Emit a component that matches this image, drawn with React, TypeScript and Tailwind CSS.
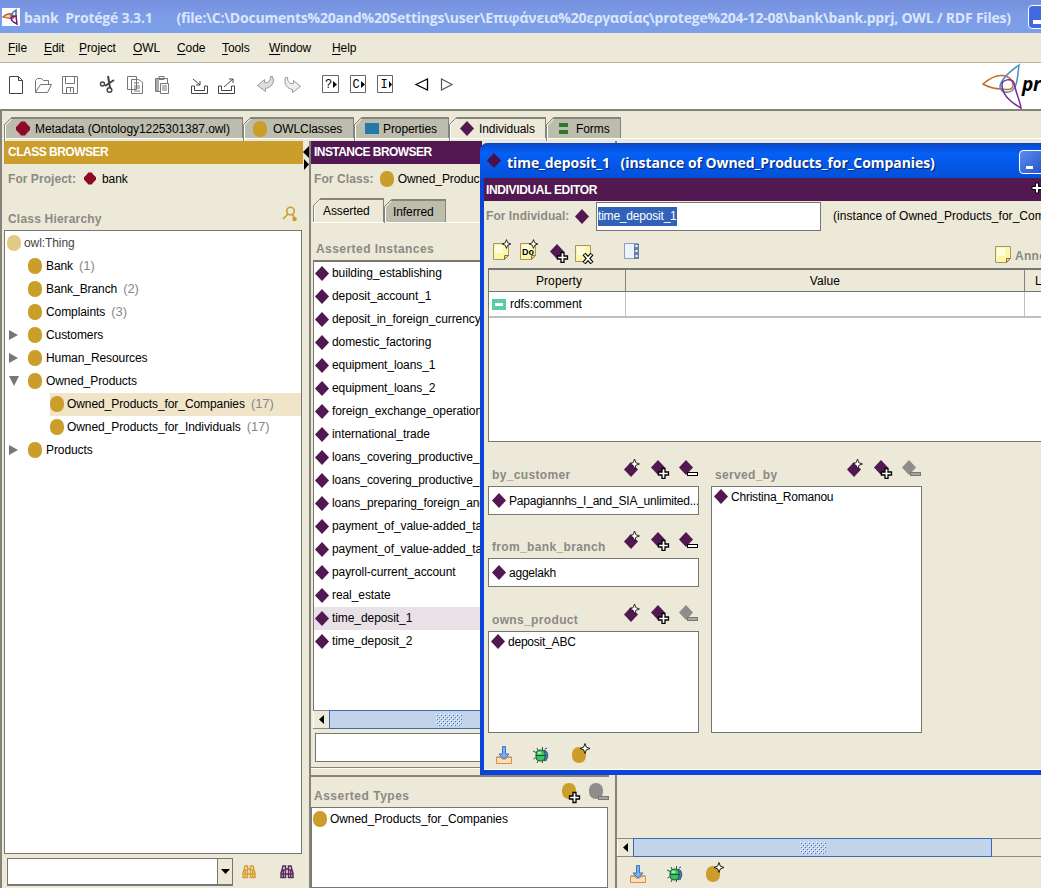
import type { ReactNode } from "react";
import clsx from "clsx";

interface ClassNode {
  name: string;
  count?: number;
  level: number;
  arrow?: "right" | "down";
  selected?: boolean;
}

const classes: ClassNode[] = [
  { name: "Bank", count: 1, level: 1 },
  { name: "Bank_Branch", count: 2, level: 1 },
  { name: "Complaints", count: 3, level: 1 },
  { name: "Customers", level: 1, arrow: "right" },
  { name: "Human_Resources", level: 1, arrow: "right" },
  { name: "Owned_Products", level: 1, arrow: "down" },
  { name: "Owned_Products_for_Companies", count: 17, level: 2, selected: true },
  { name: "Owned_Products_for_Individuals", count: 17, level: 2 },
  { name: "Products", level: 1, arrow: "right" },
];

const instances = [
  "building_establishing",
  "deposit_account_1",
  "deposit_in_foreign_currency",
  "domestic_factoring",
  "equipment_loans_1",
  "equipment_loans_2",
  "foreign_exchange_operations",
  "international_trade",
  "loans_covering_productive_1",
  "loans_covering_productive_2",
  "loans_preparing_foreign_and",
  "payment_of_value-added_tax_1",
  "payment_of_value-added_tax_2",
  "payroll-current_account",
  "real_estate",
  "time_deposit_1",
  "time_deposit_2",
];

const STAR = "M0-5.5 1.5-1.5 5.5 0 1.5 1.5 0 5.5-1.5 1.5-5.5 0-1.5-1.5z";
const PLUS = "M-1.5-5h3v3.500h3.500v3h-3.500v3.500h-3v-3.500h-3.500v-3h3.500z";

function Diamond({ color = "#521852" }: { color?: string }) {
  return (
    <svg width="14" height="15" viewBox="0 0 14 15" className="shrink-0">
      <path d="M7 0 14 7.500 7 15 0 7.500z" fill={color} />
    </svg>
  );
}

function ClassDot({ color = "#cb9e2b" }: { color?: string }) {
  return (
    <svg width="14" height="16" viewBox="0 0 14 16" className="shrink-0">
      <rect width="14" height="16" rx="6.600" ry="7" fill={color} />
    </svg>
  );
}

function ProjectDot({ size = 11 }: { size?: number }) {
  return (
    <svg width={size} height={size + 1} viewBox="0 0 14 14" className="shrink-0">
      <path d="M5 0h4l2 2.500 3 3v3l-3 3L9 14H5l-2-2.500-3-3v-3l3-3z" fill="#8c0a28" />
    </svg>
  );
}

function DiamondAction({ kind, disabled }: { kind: "new" | "add" | "remove"; disabled?: boolean }) {
  const fill = disabled ? "#8d8d8d" : "#521852";
  return (
    <svg width="20" height="21" viewBox="0 0 20 21" className="shrink-0">
      {kind === "new" ? (
        <>
          <path d="M8 4 15 11.500 8 19 1 11.500z" fill={fill} />
          <path d={STAR} transform="translate(11.500 6) scale(.9)" fill="#fff" stroke="#111" strokeWidth="1" />
        </>
      ) : (
        <path d="M7 2 14 9.500 7 17 0 9.500z" fill={fill} />
      )}
      {kind === "add" && <path d={PLUS} transform="translate(12.500 15.500)" fill="#fff" stroke="#000" strokeWidth="1.300" />}
      {kind === "remove" && (
        <rect x="8.500" y="14.500" width="10" height="3" fill={disabled ? "#a5a5a5" : "#fff"} stroke={disabled ? "#777" : "#000"} />
      )}
    </svg>
  );
}

function ClassAction({ kind }: { kind: "new" | "add" | "remove" }) {
  return (
    <svg width="20" height="21" viewBox="0 0 20 21" className="shrink-0">
      {kind === "new" ? (
        <>
          <rect x="1" y="4" width="14" height="16" rx="6.600" ry="7" fill="#cb9e2b" />
          <path d={STAR} transform="translate(14 5.500) scale(.9)" fill="#fff" stroke="#000" />
        </>
      ) : (
        <rect x="0" y="0" width="14" height="16" rx="6.600" ry="7" fill={kind === "add" ? "#cb9e2b" : "#8d8d8d"} />
      )}
      {kind === "add" && <path d={PLUS} transform="translate(12.500 14.500)" fill="#fff" stroke="#000" strokeWidth="1.300" />}
      {kind === "remove" && <rect x="9.500" y="13.500" width="10" height="3" fill="#a5a5a5" stroke="#777" />}
    </svg>
  );
}

function Note({ kind }: { kind?: "new" | "do" | "delete" }) {
  return (
    <svg width="20" height="24" viewBox="0 0 20 24" className="shrink-0">
      <path d="M1.500 5.500h15v12l-4 4h-11z" fill="#fff5a8" stroke="#a09868" />
      <path d="M3 7h8v8H3z" fill="#fffde0" />
      <path d="M12.500 21.500v-4h4z" fill="#f1d66c" stroke="#8c7440" />
      {kind === "do" && (
        <text x="3" y="16.500" fontSize="9" fontWeight="bold" fontFamily="Liberation Sans, sans-serif">
          Do
        </text>
      )}
      {(kind === "new" || kind === "do") && (
        <path d={STAR} transform="translate(14.500 6) scale(.8)" fill="#fff" stroke="#000" />
      )}
      {kind === "delete" && (
        <>
          <path d="m10 14 8 9m0-9-8 9" stroke="#000" strokeWidth="4" />
          <path d="m10.500 14.500 7 8m0-8-7 8" stroke="#fff" strokeWidth="1.800" />
        </>
      )}
    </svg>
  );
}

function Binoculars({ color }: { color: string }) {
  return (
    <svg width="14" height="14" viewBox="0 0 14 14" fill="none" stroke={color} strokeWidth="1.500">
      <path d="M3 1h2.500v3h3V1H11l1 4 1 3v4.500H8.500V9h-3v3.500H1V8l1-3zM2 5h3.500v4M12 5H8.500v4M3.300 5v7M10.700 5v7M1 9h4M9 9h4" />
    </svg>
  );
}

function StatusIcons() {
  return (
    <div className="flex items-end">
      <svg width="16" height="18" viewBox="0 0 16 18" className="mr-[21px]">
        <path d="M.500 11v6.500h15V11z" fill="#fce0b0" stroke="#d98b55" />
        <path d="M1 11h4l1 2h4l1-2h4" stroke="#9c8a80" fill="#fff" />
        <path d="M6.500.500h3V8h3.500L8 13 3 8h3.500z" fill="#7eb2ee" stroke="#3a72bf" />
      </svg>
      <svg width="16" height="18" viewBox="0 0 16 18" className="mr-[22px]">
        <path d="m4 2 1.500 3m4-4v4M0 5l4 2m-3.500 6 3.500-2m0 6 1.500-3m4 0v3m2.500-14 2-1m-2 11 2 1.500" stroke="#305048" />
        <path d="M11 4c5 1 5 10 0 11z" fill="#4b78b8" stroke="#305080" />
        <rect x="3" y="4" width="9" height="11" rx="4" fill="#3cc060" stroke="#17663a" />
        <path d="M3 9.500h10" stroke="#12572c" />
        <ellipse cx="6.500" cy="7" rx="2" ry="1.300" fill="#a0efa8" />
      </svg>
      <ClassAction kind="new" />
    </div>
  );
}

function TabItem({ label, icon, active, className }: { label: string; icon?: ReactNode; active?: boolean; className?: string }) {
  return (
    <div
      className={clsx(
        "relative flex h-full items-center border-t-2 border-r border-[#85837a] whitespace-nowrap",
        active ? "bg-[#ece9d8]" : "bg-[#bdbdae]",
        className,
      )}
    >
      <svg width="8" height="24" viewBox="0 0 8 24" className="absolute -top-0.5 left-0">
        <path d="M0 0h8L0 8z" fill="#ece9d8" />
        <path d="M.500 24V7.500l7-7" stroke="#85837a" fill="none" />
        <path d="M1.500 24V8l6-6" stroke="#fff" fill="none" />
      </svg>
      {icon}
      <span>{label}</span>
    </div>
  );
}

function Scrollbar({ thumb }: { thumb: string }) {
  return (
    <div className="flex h-[19px] shrink-0 border-y border-[#8a8a82] bg-[#ece9d8]">
      <div className="flex w-4 shrink-0 items-center justify-center border-l border-white">
        <svg width="5" height="9" viewBox="0 0 5 9">
          <path d="M5 0v9L0 4.500z" />
        </svg>
      </div>
      <div className={clsx("-my-px flex shrink-0 items-center justify-center border border-[#3a6bb5] bg-[#c2d3ea]", thumb)}>
        <svg width="26" height="12">
          <defs>
            <pattern id="grip" width="4" height="4" patternUnits="userSpaceOnUse">
              <path d="M0 0h1v1H0zM2 2h1v1H2z" fill="#fff" />
              <path d="M1 1h1v1H1zM3 3h1v1H3z" fill="#4878c0" />
            </pattern>
          </defs>
          <rect width="26" height="12" fill="url(#grip)" />
        </svg>
      </div>
    </div>
  );
}

function Toolbar() {
  return (
    <div className="flex h-[49px] shrink-0 items-start border-t border-b-2 border-t-[#b8b5a6] border-b-[#85837a] bg-white pt-2.5 pl-2">
      <svg width="450" height="24" viewBox="8 73 450 24" fill="none" stroke="#444" className="shrink-0">
        {/* new, open, save */}
        <path d="M9.500 76.500h9l4 4v13h-13zM18.500 76.500v4h4" />
        <path d="M35.500 92.500v-12l2-2h4l2 2h5v4M35.500 92.500l5-8h11l-4 8z" stroke="#777" />
        <path d="M62.500 76.500h15v17h-15zM65.500 76.500v7h9v-7M66.500 93.500v-6h7v6M70.500 88v4" stroke="#777" />
        {/* cut, copy, paste */}
        <path d="m108 76 2 12M114 80l-9 6" strokeWidth="2" />
        <circle cx="102.500" cy="84" r="2" strokeWidth="1.500" />
        <circle cx="109.500" cy="90" r="2.300" strokeWidth="1.500" />
        <path d="M127.500 76.500h9v13h-9zM131.500 79.500h7l4 3v11h-11zM134 83h5m-5 3h6m-6 2h6m-6 3h6" stroke="#777" />
        <path d="M155.500 78.500h12v5M155.500 78.500v13h5M159 76.500h5v3h-5zM160.500 83.500h8v10h-8zM162 86h5m-5 2h5m-5 2h5" stroke="#777" />
        <path d="M156 79h3v12h-3z" fill="#aaa" stroke="none" />
        {/* archive, revert */}
        <path d="M194.500 86h-3v7.500h16V86h-3M194.500 86v4.500h10V86M193 79l7 6m0-4v4h-4" />
        <path d="M221.500 86h-3v7.500h16V86h-3M221.500 86v4.500h10V86M224 87l9-8m-4 0h4v4" />
        {/* undo, redo */}
        <path d="m257.500 85.500 7-6v3c4 1 6-2 6-6h2c3 7-2 11-7 12v3z" fill="#ddd" stroke="#999" />
        <path d="m300.500 86.500-7-6v3c-4 1-6-2-6-6h-2c-2 7 2 11 7 12v3z" fill="#eee" stroke="#999" />
        <path d="M322.500 75.500h16v17h-16zM350.500 75.500h15v17h-15zM377.500 75.500h15v17h-15z" stroke="#666" />
        <path d="m333 81 4 3.500-4 3.500zM361 81l4 3.500-4 3.500zM389 81l3 3.500-3 3.500z" fill="#000" stroke="none" />
        <g fill="#000" stroke="none" fontSize="12" fontFamily="Liberation Mono, monospace">
          <text x="325" y="88">?</text>
          <text x="352.500" y="88">C</text>
          <text x="380.500" y="88">I</text>
        </g>
        <path d="M416 84.500 427.500 79v11z" stroke="#000" strokeWidth="1.300" />
        <path d="M452 84.500 441.500 79v11z" stroke="#555" strokeWidth="1.200" />
      </svg>
      <svg width="42" height="46" viewBox="0 0 42 46" fill="none" strokeWidth="1.500" className="-mt-2.5 ml-[524px] shrink-0">
        <path d="M1 21c7-6 13-9 19-8.500 8 .500 11 5.500 11 9.500 0 5-5 5-11 4-8 0-14-2-19-5z" stroke="#c56a24" />
        <path d="M37 2c-7 5-19 14-19 22 0 6 11 8 15 0 3-6 3-16 4-22z" stroke="#4a90c0" />
        <path d="M39 45c-9-5-19-13-19-23 0-6 10-7 12-2 2 10 6 18 7 25z" stroke="#7a2a90" />
      </svg>
      <span className="-mt-px -ml-0.5 shrink-0 font-['Open_Sans',sans-serif] text-[19px] leading-6 font-bold tracking-[-0.3px] italic">protégé</span>
    </div>
  );
}

function ClassBrowser() {
  return (
    <section className="flex w-[299px] shrink-0 flex-col">
      <div className="h-[23px] shrink-0 bg-[#cb9e2b] pl-1 font-bold leading-[23px] tracking-[-0.5px] text-white">CLASS BROWSER</div>
      <div className="flex h-[31px] shrink-0 items-center pb-0.5 pl-1">
        <b className="tracking-[0.05px] text-[#8a8a85]">For Project:</b>
        <span className="mx-1.5 ml-2">
          <ProjectDot size={12} />
        </span>
        bank
      </div>
      <div className="flex h-[35px] shrink-0 items-end justify-between pr-1.5 pb-[3px] pl-1">
        <b className="tracking-[0.2px] text-[#8a8a85]">Class Hierarchy</b>
        <svg width="15" height="17" viewBox="0 0 15 17" fill="none" stroke="#cb9e2b" strokeWidth="1.600" className="mb-1">
          <circle cx="8.500" cy="5" r="3.800" />
          <path d="m6 8-5 5m9-5 2 3" />
          <circle cx="12.500" cy="13" r="1.500" fill="#cb9e2b" />
        </svg>
      </div>
      <div className="h-[624px] w-[298px] shrink-0 border border-[#77766f] bg-white pt-px">
        <div className="flex h-[23px] items-center gap-[3px] pb-0.5 pl-0.5 text-[#444]">
          <ClassDot color="#e3c986" />
          owl:Thing
        </div>
        {classes.map((node) => (
          <div key={node.name} className="flex h-[23px] items-center">
            <div className={clsx("flex shrink-0 items-center pb-0.5 pl-1", node.level === 2 ? "w-[45px]" : "w-[23px]")}>
              {node.arrow && (
                <svg width="10" height="10" viewBox="0 0 10 10">
                  <path d={node.arrow === "right" ? "M0 0 9 5 0 10z" : "M0 0h10L5 10z"} fill="#777" />
                </svg>
              )}
            </div>
            <div className={clsx("flex h-full flex-1 items-center pb-0.5", node.selected && "bg-[#f0e5c9]")}>
              <ClassDot />
              <span className={node.level === 2 ? "ml-[3px]" : "ml-1"}>{node.name}</span>
              {node.count && <span className="ml-1.5 text-[13px] text-[#888]">({node.count})</span>}
            </div>
          </div>
        ))}
      </div>
      <div className="flex items-center pt-1 pl-[3px]">
        <div className="flex h-7 w-[226px] border border-b-2 border-[#77766f] bg-white">
          <div className="ml-auto flex w-[15px] items-center justify-center border-l border-[#77766f] bg-[#ece9d8]">
            <svg width="9" height="5" viewBox="0 0 9 5">
              <path d="M0 0h9L4.500 5z" />
            </svg>
          </div>
        </div>
        <div className="flex gap-6 pl-[9px]">
          <Binoculars color="#d8a032" />
          <Binoculars color="#5c2860" />
        </div>
      </div>
    </section>
  );
}

function InstanceBrowser() {
  return (
    <section className="flex w-[306px] shrink-0 flex-col border-l-2 border-[#85837a]">
      <div className="h-[23px] w-[171px] shrink-0 bg-[#521852] pl-[3px] font-bold leading-[23px] tracking-[-0.55px] text-white">INSTANCE BROWSER</div>
      <div className="flex h-[31px] w-[169px] shrink-0 items-center overflow-hidden pb-0.5 pl-[3px]">
        <b className="mr-1.5 shrink-0 tracking-[0.1px] text-[#8a8a85]">For Class:</b>
        <ClassDot />
        <span className="ml-1">Owned_Products_for_Companies</span>
      </div>
      <div className="flex h-7 shrink-0 items-end border-b border-white pt-1 pl-0.5">
        <div className="h-6">
          <TabItem label="Asserted" active className="w-[71px] pl-2.5" />
        </div>
        <div className="h-[23px]">
          <TabItem label="Inferred" className="w-[62px] pl-[9px]" />
        </div>
      </div>
      <div className="flex h-[37px] shrink-0 items-end pb-[3px] pl-[5px] font-bold tracking-[0.45px] text-[#8a8a85]">Asserted Instances</div>
      <div className="ml-0.5 h-[450px] w-[169px] shrink-0 overflow-hidden border-t-2 border-l border-[#77766f] bg-white whitespace-nowrap">
        {instances.map((name) => (
          <div key={name} className={clsx("flex h-[23px] items-center gap-[3px] pb-px pl-px", name === "time_deposit_1" && "bg-[#e8e1e8]")}>
            <Diamond />
            {name}
          </div>
        ))}
      </div>
      <div className="ml-0.5">
        <Scrollbar thumb="w-60" />
      </div>
      <div className="mt-1 ml-1 h-[29px] shrink-0 border border-[#77766f] bg-white" />
      <div className="mt-[5px] h-2 w-[300px] shrink-0 border-t border-[#85837a] shadow-[inset_0_1px_0_#fff]" />
      <div className="flex h-8 w-[298px] shrink-0 items-end border-t-2 border-[#85837a] pb-px pl-[3px]">
        <b className="mr-auto mb-0.5 tracking-[0.5px] text-[#8a8a85]">Asserted Types</b>
        <div className="mb-0.5 flex gap-[7px]">
          <ClassAction kind="add" />
          <ClassAction kind="remove" />
        </div>
      </div>
      <div className="h-[81px] w-[297px] shrink-0 border border-[#77766f] bg-white">
        <div className="flex h-[23px] items-center gap-[3px] pb-px pl-px">
          <ClassDot />
          Owned_Products_for_Companies
        </div>
      </div>
    </section>
  );
}

interface SlotProps {
  label: string;
  value: string;
  canRemove?: boolean;
  box: string;
}

function PropertySlot({ label, value, canRemove, box }: SlotProps) {
  return (
    <div className="w-[211px]">
      <div className="flex h-[29px] items-start pl-1">
        <b className="mr-auto pt-2.5 tracking-[0.35px] text-[#8a8a85]">{label}</b>
        <div className="flex gap-[8px] pt-px">
          <DiamondAction kind="new" />
          <DiamondAction kind="add" />
          <DiamondAction kind="remove" disabled={!canRemove} />
        </div>
      </div>
      <div className={clsx("flex overflow-hidden border border-[#77766f] bg-white", box)}>
        <div className="flex h-[19px] items-center gap-[3px]">
          <Diamond />
          <span className="tracking-[-0.22px] whitespace-nowrap">{value}</span>
        </div>
      </div>
    </div>
  );
}

function IndividualDialog() {
  return (
    <div className="absolute top-[143px] left-[480px] flex h-[632px] w-[600px] flex-col rounded-tl-lg border-b-[5px] border-l-4 border-[#0a45d8] bg-[#ece9d8] shadow-[inset_0_-1px_0_#fff]">
      <div className="-ml-1 flex h-[35px] shrink-0 items-center rounded-tl-lg bg-linear-to-b from-[#0a45c8] via-[#0560f4] via-30% to-[#0450d8] pl-[7px]">
        <Diamond color="#48104c" />
        <span className="mt-1 ml-1.5 w-[432px] shrink-0 font-['Open_Sans',sans-serif] text-sm font-bold tracking-[-0.07px] whitespace-pre text-white [text-shadow:1px_1px_1px_#0a1f70]">
          {"time_deposit_1   (instance of Owned_Products_for_Companies)"}
        </span>
        <div className="mt-0.5 ml-[80px] flex h-6 w-[26px] shrink-0 rounded-[4px] border border-white bg-linear-to-br from-[#5c8cf0] to-[#2450c8] pl-1.5">
          <span className="mt-[15px] h-[3px] w-[7px] bg-white" />
        </div>
      </div>
      <div className="flex h-[23px] shrink-0 items-center bg-[#521852] pl-0.5 font-bold text-white">
        <span className="w-[545px] shrink-0 tracking-[-0.35px]">INDIVIDUAL EDITOR</span>
        <svg width="12" height="12" viewBox="-6 -6 12 12" className="mb-1">
          <path d={PLUS} fill="#fff" stroke="#000" />
        </svg>
      </div>
      <div className="flex h-[30px] shrink-0 items-center pl-0.5">
        <b className="w-[89px] shrink-0 tracking-[0.05px] whitespace-nowrap text-[#8a8a85]">For Individual:</b>
        <Diamond />
        <div className="ml-[7px] flex h-[29px] w-[225px] shrink-0 items-center border border-[#77766f] bg-white pl-px">
          <span className="bg-[#3162b8] leading-[19px] tracking-[-0.2px] text-white">time_deposit_1</span>
        </div>
        <span className="ml-3 tracking-[0.05px] whitespace-nowrap">(instance of Owned_Products_for_Companies)</span>
      </div>
      <div className="flex h-[37px] shrink-0 items-center pl-2">
        <Note kind="new" />
        <span className="ml-[7px] shrink-0">
          <Note kind="do" />
        </span>
        <span className="mt-1.5 ml-[11px] shrink-0">
          <DiamondAction kind="add" />
        </span>
        <span className="mt-1 ml-[4px] shrink-0">
          <Note kind="delete" />
        </span>
        <svg width="16" height="17" viewBox="0 0 16 17" className="mt-1 ml-[30px] shrink-0">
          <path d="M.500.500h14v15H.500z" fill="#eef4fb" stroke="#8ca0b8" />
          <path d="M10 1h5v15h-5z" fill="#6682a8" />
          <path d="M11.500 2h2v2h-2zM11.500 7h2v2h-2zM11.500 12h2v2h-2z" fill="#fff" />
        </svg>
        <span className="ml-[354px] flex shrink-0 items-center gap-px">
          <span className="mt-1.5">
            <Note />
          </span>
          <b className="mt-3 tracking-[0.3px] text-[#8a8a85]">Annotations</b>
        </span>
      </div>
      <div className="ml-1 flex h-[174px] shrink-0 flex-col border border-t-2 border-[#77766f] bg-white">
        <div className="flex h-[22px] border-b border-[#77766f] bg-[#ece9d8] text-center leading-[23px] tracking-[0.1px]">
          <span className="w-[137px] border-r border-[#85837a] pl-1">Property</span>
          <span className="w-[399px] border-r border-[#85837a]">Value</span>
          <span className="pl-2.5">Lang</span>
        </div>
        <div className="flex h-[26px] border-b-2 border-[#c0c0c0]">
          <div className="flex w-[137px] items-center border-r border-[#c0c0c0] pl-[3px]">
            <svg width="14" height="11" className="mr-1">
              <rect width="14" height="11" fill="#5bcba3" />
              <rect x="3" y="4" width="8" height="3" fill="#fff" />
            </svg>
            rdfs:comment
          </div>
          <div className="w-[399px] border-r border-[#c0c0c0]" />
        </div>
      </div>
      <div className="flex gap-3 pt-[15px] pl-1">
        <div className="flex flex-col">
          <PropertySlot label="by_customer" value="Papagiannhs_I_and_SIA_unlimited..." canRemove box="h-[29px] items-center pl-[3px]" />
          <div className="h-3.5" />
          <PropertySlot label="from_bank_branch" value="aggelakh" canRemove box="h-[29px] items-center pl-[3px]" />
          <div className="h-[15px]" />
          <PropertySlot label="owns_product" value="deposit_ABC" box="h-[102px] pl-[2px]" />
        </div>
        <PropertySlot label="served_by" value="Christina_Romanou" box="h-[247px] pl-[2px]" />
      </div>
      <div className="mt-2.5 pl-3">
        <StatusIcons />
      </div>
    </div>
  );
}

export default function App() {
  return (
    <div className="relative flex h-[888px] w-[1041px] flex-col overflow-hidden bg-[#ece9d8] font-['Liberation_Sans',Arial,sans-serif] text-xs tracking-[-0.08px] text-black">
      <header className="flex h-[33px] shrink-0 items-center bg-linear-to-b from-[#7590dc] via-[#7d9ce8] to-[#7ba0e8] pl-0.5">
        <svg width="18" height="18" viewBox="0 0 18 18" className="shrink-0">
          <path d="M0 0h18v18H0z" fill="#fff" />
          <path d="M1 9c4-4 8-4 11-1 1 3-4 3-11 1z" fill="#f5d0b0" stroke="#c05018" strokeWidth="1.300" />
          <path d="M9 8c0-2 2-4 5-6v7" fill="none" stroke="#356eaa" strokeWidth="1.500" />
          <path d="M9 9c0 4 2 5 6 7l-1-8z" fill="none" stroke="#662080" strokeWidth="1.500" />
        </svg>
        <span className="mt-0.5 ml-1 w-[1000px] shrink-0 font-['Open_Sans',sans-serif] text-sm font-bold tracking-[-0.21px] whitespace-pre text-[#dbe6fb]">
          {"bank  Protégé 3.3.1       (file:\\C:\\Documents%20and%20Settings\\user\\Επιφάνεια%20εργασίας\\protege%204-12-08\\bank\\bank.pprj, OWL / RDF Files)"}
        </span>
        <div className="ml-1 flex h-6 w-6 shrink-0 rounded-[4px] border border-white bg-[#4169e0] pl-1">
          <span className="mt-3.5 h-1 w-2 bg-white" />
        </div>
      </header>
      <nav className="flex h-[29px] shrink-0 items-center pl-2">
        {[
          ["File", "w-9"],
          ["Edit", "w-[35px]"],
          ["Project", "w-[54px]"],
          ["OWL", "w-11"],
          ["Code", "w-[45px]"],
          ["Tools", "w-[47px]"],
          ["Window", "w-[63px]"],
          ["Help", "w-10"],
        ].map(([label, width]) => (
          <span key={label} className={width}>
            <u className="underline-offset-2">{label[0]}</u>
            {label.slice(1)}
          </span>
        ))}
      </nav>
      <Toolbar />
      <main className="flex min-h-0 flex-1 flex-col border-l-2 border-[#85837a]">
        <div className="flex h-7 shrink-0 border-b border-white pt-1.5 pl-0.5">
          <TabItem className="w-[239px] gap-[5px] pl-3" icon={<ProjectDot size={14} />} label="Metadata (Ontology1225301387.owl)" />
          <TabItem className="w-[111px] gap-1.5 pl-2.5" icon={<ClassDot />} label="OWLClasses" />
          <TabItem
            className="w-[95px] gap-1 pl-[11px]"
            icon={
              <svg width="14" height="11">
                <rect width="14" height="11" fill="#2579a8" />
              </svg>
            }
            label="Properties"
          />
          <TabItem className="w-[97px] gap-[5px] pl-[11px]" active icon={<Diamond />} label="Individuals" />
          <TabItem
            className="w-[75px] gap-2 pl-[13px]"
            icon={
              <svg width="9" height="11">
                <path d="M0 0h9v4H0zM0 7h9v4H0z" fill="#2f7a28" />
              </svg>
            }
            label="Forms"
          />
        </div>
        <div className="flex min-h-0 flex-1 pt-0.5 pl-0.5">
          <ClassBrowser />
          <div className="w-[6px] shrink-0 pt-[5px]">
            <svg width="6" height="24" viewBox="0 0 6 24">
              <path d="M6 0v12L0 6zM1 13l5 5.500-5 5.500z" />
            </svg>
          </div>
          <InstanceBrowser />
          <section className="flex flex-1 flex-col justify-end border-l-2 border-[#85837a] pb-[5px]">
            <Scrollbar thumb="w-[359px]" />
            <div className="mt-[5px] pl-[13px]">
              <StatusIcons />
            </div>
          </section>
        </div>
      </main>
      <IndividualDialog />
    </div>
  );
}
